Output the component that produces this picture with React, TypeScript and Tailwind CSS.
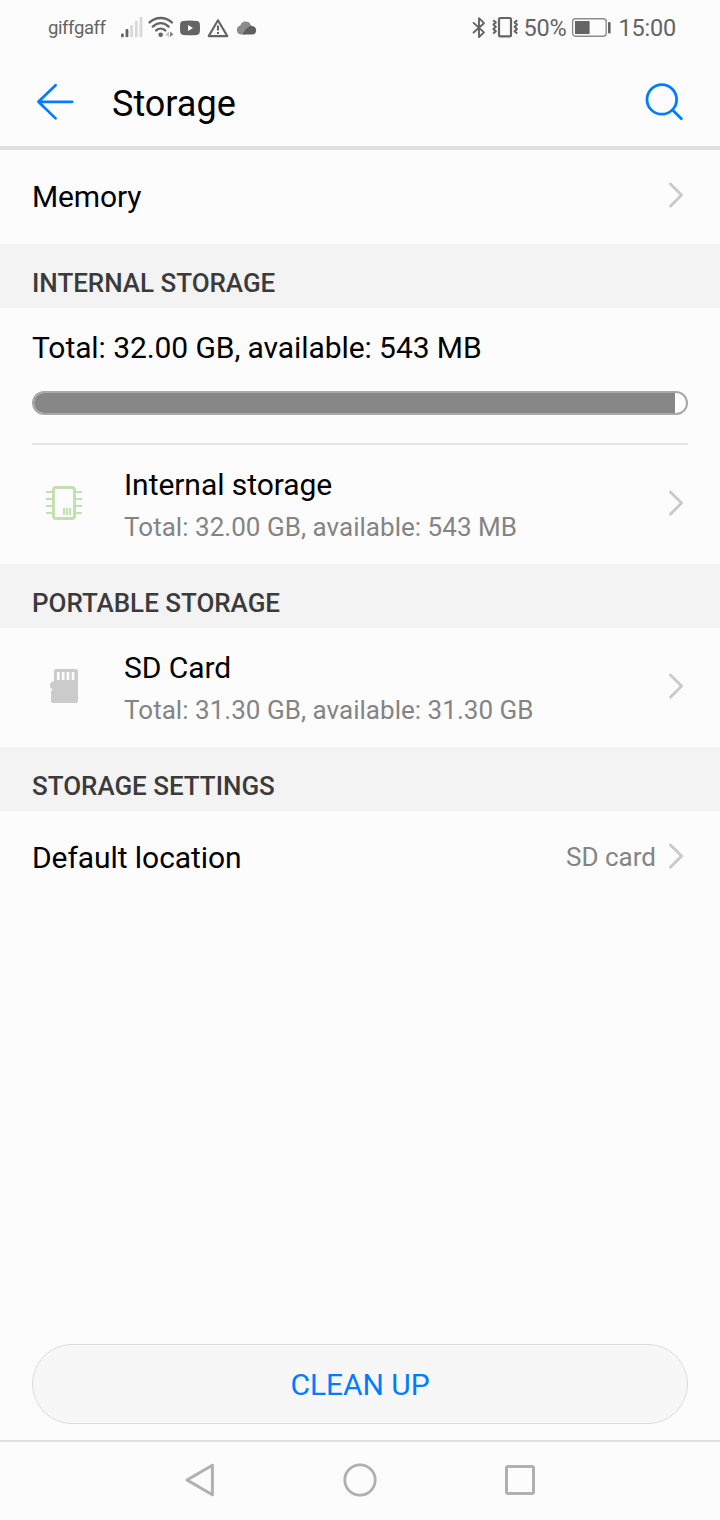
import type { ReactNode } from 'react';

interface StorageRowProps {
  icon: ReactNode;
  title: string;
  summary: string;
}

const USED_PERCENT = 98.3;

const Chevron = () => (
  <svg className="h-7 w-4 shrink-0" viewBox="0 0 16 28" fill="none" stroke="#c9c9c9" strokeWidth="2.8" strokeLinecap="round" strokeLinejoin="round">
    <path d="M2.4 3 13.6 14 2.4 25.2" />
  </svg>
);

const SignalIcon = () => (
  <svg className="h-6 w-6" viewBox="0 0 24 24">
    <g fill="#646464">
      <rect x="1" y="17.6" width="2.8" height="3.6" rx="1" />
      <rect x="5.6" y="13" width="2.8" height="8.2" rx="1" />
    </g>
    <g fill="#d8d8d8">
      <rect x="10.2" y="9" width="2.8" height="12.2" rx="1" />
      <rect x="14.9" y="4.8" width="2.8" height="16.4" rx="1" />
      <rect x="19.6" y="0.8" width="2.8" height="20.4" rx="1" />
    </g>
  </svg>
);

const WifiIcon = () => (
  <svg className="ml-1 h-6 w-[26px]" viewBox="0 0 26 24" fill="none" stroke="#646464" strokeWidth="2.4" strokeLinecap="round">
    <path d="M1.6 6.4C7.8.5 17.6.5 23.8 6.4" />
    <path d="M4.8 10.6c4.6-4.6 11.2-4.6 15.8 0" />
    <path d="M8.2 14.4c2.6-2.4 6.4-2.4 9 0" />
    <circle cx="12.7" cy="18.7" r="2.3" fill="#646464" stroke="none" />
    <path d="M21 15.4 17.6 18.3 21 21.2Z" fill="#c4c4c4" stroke="none" />
    <path d="M22 15.4 25.4 18.3 22 21.2Z" fill="#858585" stroke="none" />
  </svg>
);

const VideoIcon = () => (
  <svg className="ml-1.5 h-6 w-5" viewBox="0 0 20 24">
    <path d="M3 4.9Q10 4.3 17 4.9 19.6 5.1 19.8 8 20.2 12 19.8 16 19.6 18.7 17 18.9 10 19.4 3 18.9.4 18.7.2 16-.2 12 .2 8 .4 5.1 3 4.9Z" fill="#646464" />
    <path d="M8 9v6l5-3Z" fill="#fcfcfc" />
  </svg>
);

const WarningIcon = () => (
  <svg className="ml-1.5 h-6 w-6" viewBox="0 0 24 24" fill="none" stroke="#646464" strokeWidth="2.1" strokeLinejoin="round">
    <path d="M12 4.3 21.3 20.1H2.7Z" />
    <path d="M12 9.6v5M12 16v2" />
  </svg>
);

const CloudIcon = () => (
  <svg className="ml-1.5 h-6 w-[21px]" viewBox="0 0 21 24">
    <path d="M5 18.6A4.7 4.7 0 0 1 4.3 9.4 5.6 5.6 0 0 1 14.8 9L16 13 9 18.6Z" fill="#8b8b8b" />
    <path d="M9 14.8a4 4 0 0 1 3-3.4 4.6 4.6 0 0 1 5-1.2 4.3 4.3 0 0 1-.6 8.4H6.8A5 5 0 0 1 9 14.8Z" fill="#5e5e5e" />
  </svg>
);

const BluetoothIcon = () => (
  <svg className="h-6 w-4" viewBox="0 0 16 24" fill="none" stroke="#646464" strokeWidth="1.9" strokeLinejoin="round">
    <path d="M2 6.4 13 16.4 8 21V2.2L13 7.2 2 17" />
  </svg>
);

const VibrateIcon = () => (
  <svg className="ml-1 h-6 w-7" viewBox="0 0 28 24" fill="none" stroke="#646464" strokeLinejoin="round">
    <rect x="8" y="2" width="12" height="18.4" rx="1.4" strokeWidth="2.2" />
    <path d="M2.2 4.400 4.800 6.400 2.400 8.600 4.800 10.800 2.400 13 4.800 15.200 2.200 17.600" strokeWidth="2.1" />
    <path d="M26.200 4.400 23.600 6.400 26 8.600 23.600 10.800 26 13 23.600 15.200 26.200 17.600" strokeWidth="2.1" />
  </svg>
);

const BatteryIcon = () => (
  <svg className="ml-[5px] h-6 w-10" viewBox="0 0 40 24">
    <rect x="1.6" y="2.8" width="33.6" height="17.4" rx="3" fill="#fcfcfc" stroke="#8c8c8c" strokeWidth="1.4" />
    <rect x="4" y="5" width="14.6" height="13" fill="#646464" />
    <rect x="37" y="6" width="2.6" height="11.4" rx="1" fill="#646464" />
  </svg>
);

const StatusBar = () => (
  <div className="flex h-14 items-center pr-11 pl-12 text-[#646464]">
    <span className="w-[72px] text-[18.5px] leading-6 tracking-[-0.4px]">giffgaff</span>
    <SignalIcon />
    <WifiIcon />
    <VideoIcon />
    <WarningIcon />
    <CloudIcon />
    <div className="ml-auto flex items-center text-[23.5px] leading-6 tracking-[-0.2px]">
      <BluetoothIcon />
      <VibrateIcon />
      <span className="ml-1">50%</span>
      <BatteryIcon />
      <span className="ml-[7px]">15:00</span>
    </div>
  </div>
);

const Header = () => (
  <header className="flex h-[94px] items-center border-b-4 border-[#e0e0e0] px-9">
    <svg className="h-10 w-10" viewBox="0 0 40 40" fill="none" stroke="#007dff" strokeWidth="2.7" strokeLinecap="round" strokeLinejoin="round">
      <path d="M19.6 4.2 2.4 20.8 19.6 37.4M2.4 20.8H36.2" />
    </svg>
    <h1 className="ml-9 pt-1.5 text-[36px] leading-[44px] text-black">Storage</h1>
    <svg className="ml-auto h-10 w-10" viewBox="0 0 40 40" fill="none" stroke="#007dff" strokeWidth="2.8" strokeLinecap="round">
      <circle cx="17.8" cy="18.4" r="14.8" />
      <path d="M28.8 29.2 37.4 37.8" />
    </svg>
  </header>
);

const SectionTitle = ({ children }: { children: ReactNode }) => (
  <h2 className="h-16 bg-[#f3f3f3] px-8 pt-6 text-[26px] leading-[30px] font-medium tracking-[-0.03px] text-[#3b3b3b]">{children}</h2>
);

const StorageRow = ({ icon, title, summary }: StorageRowProps) => (
  <div className="flex h-[119px] items-center pr-9 pb-[3px] pl-8">
    {icon}
    <div className="ml-7 flex-1 pt-[5px]">
      <p className="text-[30px] leading-10 tracking-[-0.05px] text-black">{title}</p>
      <p className="mt-0.5 text-[26px] leading-10 tracking-[0.03px] text-[#848484]">{summary}</p>
    </div>
    <Chevron />
  </div>
);

const ChipIcon = () => (
  <svg className="h-16 w-16" viewBox="0 0 64 64" fill="none" stroke="#c3e1ae">
    <rect x="21.5" y="16.5" width="21" height="31" rx="2.5" strokeWidth="3" />
    <path d="M14 21h6M14 28h6M14 35h6M14 42h6M44 21h6M44 28h6M44 35h6M44 42h6" strokeWidth="2" />
    <path d="M32 37v7M35 37v7M38 37v7" strokeWidth="2" />
  </svg>
);

const SdCardIcon = () => (
  <svg className="h-16 w-16" viewBox="0 0 64 64">
    <path d="M24 15H44Q46 15 46 17.500V46.500Q46 49 44 49H21.500Q19 49 19 46.500V37.500Q19 36 21 35.300 18 34.500 18 32V30.500Q18 28.500 22 27V18Q22 15 24 15Z" fill="#cbcbcb" />
    <path d="M26.300 18v8M31.200 18v8M36 18v8M41 18v8" stroke="#fcfcfc" strokeWidth="2.700" />
  </svg>
);

const NavBar = () => (
  <nav className="flex h-20 items-center justify-center gap-[120px] border-t-2 border-[#e0e0e0]">
    <svg className="h-10 w-10" viewBox="0 0 40 40" fill="none" stroke="#b0b0b0" strokeWidth="3" strokeLinejoin="round">
      <path d="M7 19 32.400 4.200V33.800Z" />
    </svg>
    <svg className="h-10 w-10" viewBox="0 0 40 40" fill="none" stroke="#b0b0b0" strokeWidth="2.800">
      <circle cx="20" cy="19" r="15.200" />
    </svg>
    <svg className="h-10 w-10" viewBox="0 0 40 40" fill="none" stroke="#b0b0b0" strokeWidth="3">
      <rect x="6.500" y="5.500" width="27" height="27" rx="1.500" />
    </svg>
  </nav>
);

export default function App() {
  return (
    <div className="flex h-[1520px] w-[720px] flex-col overflow-hidden bg-[#fcfcfc] font-[Roboto,sans-serif]">
      <StatusBar />
      <Header />

      <main className="flex-1">
        <div className="flex h-[94px] items-center justify-between pr-9 pb-1 pl-8">
          <p className="pt-1 text-[30px] leading-10 tracking-[-0.15px] text-black">Memory</p>
          <Chevron />
        </div>

        <SectionTitle>INTERNAL STORAGE</SectionTitle>
        <div className="mx-8 h-[137px] border-b-2 border-[#e4e4e4] pt-5">
          <p className="text-[30px] leading-10 tracking-[-0.08px] text-black">Total: 32.00 GB, available: 543 MB</p>
          <div className="mt-[23px] h-6 overflow-hidden rounded-full border-2 border-[#a8a8a8] bg-white">
            <div className="h-full bg-[#878787]" style={{ width: `${USED_PERCENT}%` }} />
          </div>
        </div>
        <StorageRow icon={<ChipIcon />} title="Internal storage" summary="Total: 32.00 GB, available: 543 MB" />

        <SectionTitle>PORTABLE STORAGE</SectionTitle>
        <StorageRow icon={<SdCardIcon />} title="SD Card" summary="Total: 31.30 GB, available: 31.30 GB" />

        <SectionTitle>STORAGE SETTINGS</SectionTitle>
        <div className="flex h-[92px] items-center pr-9 pb-0.5 pl-8">
          <p className="flex-1 pt-1 text-[30px] leading-10 tracking-[-0.07px] text-black">Default location</p>
          <p className="mr-3 pt-0.5 text-[26px] leading-10 text-[#848484]">SD card</p>
          <Chevron />
        </div>
      </main>

      <button type="button" className="mx-8 mb-4 h-20 shrink-0 rounded-full border border-[#dcdcdc] bg-[#f7f7f7] text-[30px] tracking-[-0.05px] text-[#007dff]">
        CLEAN UP
      </button>
      <NavBar />
    </div>
  );
}
